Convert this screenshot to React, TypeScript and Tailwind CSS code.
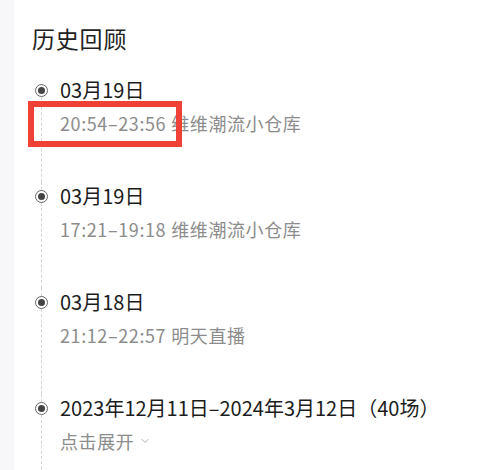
import React from "react";
import { ChevronDown } from "lucide-react";

interface Session {
  date: string;
  time?: string;
  detail: string;
  expand?: boolean;
}

const sessions: Session[] = [
  { date: "03月19日", time: "20:54–23:56", detail: "维维潮流小仓库" },
  { date: "03月19日", time: "17:21–19:18", detail: "维维潮流小仓库" },
  { date: "03月18日", time: "21:12–22:57", detail: "明天直播" },
  { date: "2023年12月11日–2024年3月12日（40场）", detail: "点击展开", expand: true },
];

export default function App() {
  return (
    <div
      className="w-[480px] h-[470px] overflow-hidden bg-white flex"
      style={{ fontFamily: '"Noto Sans CJK SC", "Noto Sans", sans-serif' }}
    >
      {/* left gutter */}
      <div className="w-[14px] shrink-0 bg-[#f7f7f9]" />

      <div className="flex-1 pl-[18px] pt-[22px]">
        <h2 className="text-[23px] leading-[32px] text-[#222] font-normal tracking-[0.8px]">历史回顾</h2>

        <div className="mt-[22px]">
          {sessions.map((s, i) => (
            <div key={i} className="relative flex">
              {/* timeline column */}
              <div className="w-[17px] shrink-0 flex flex-col items-center pl-[1px]">
                <div className={`h-[8px] border-l border-dashed ${i === 0 ? "border-transparent" : "border-[#d9d3d6]"}`} />
                <div className="w-[13px] h-[13px] rounded-full border-[1.5px] border-[#666] flex items-center justify-center">
                  <div className="w-[7px] h-[7px] rounded-full bg-[#444]" />
                </div>
                <div className="flex-1 border-l border-dashed border-[#d9d3d6]" />
              </div>

              {/* content */}
              <div className="pl-[11px] pb-[45px]">
                <div className="text-[20px] leading-[28px] text-[#1c1c1c]">{s.date}</div>
                <div className="mt-[5px] text-[18px] leading-[28px] text-[#8c8c8c] flex items-center">
                  {s.time && <span className="tracking-[0.6px] mr-[5px]">{s.time}</span>}
                  <span className="tracking-[0.6px]">{s.detail}</span>
                  {s.expand && <ChevronDown className="w-[12px] h-[12px] ml-[5px] text-[#999]" strokeWidth={1.6} />}
                </div>
              </div>

              {/* annotation box */}
              {i === 0 && (
                <div className="absolute left-[-4px] top-[25px] w-[154px] h-[46px] border-[6px] border-[#ef4136]" />
              )}
            </div>
          ))}
        </div>
      </div>
    </div>
  );
}
